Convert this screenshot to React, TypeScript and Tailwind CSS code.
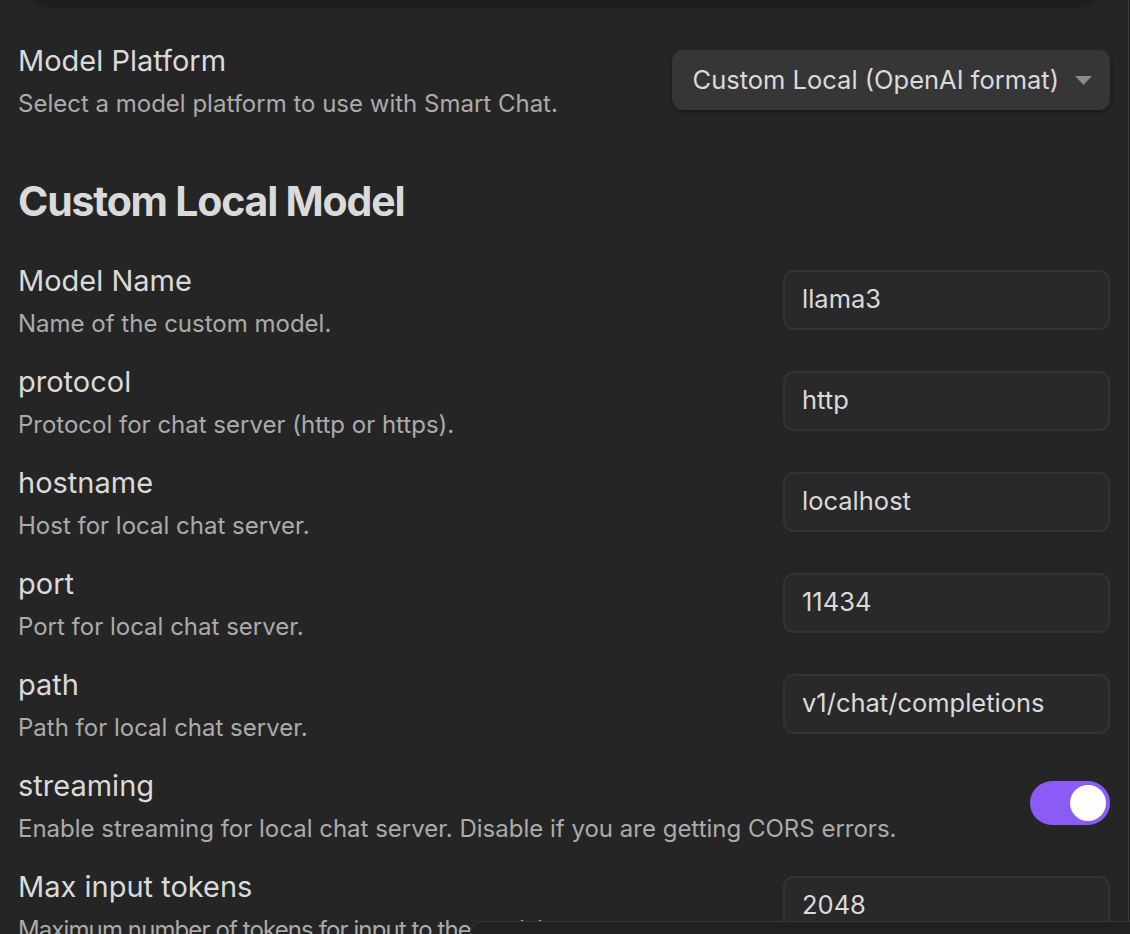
import React from "react"

type Row = {
  name: string
  desc: string
  value?: string
  toggle?: boolean
  tight?: boolean
}

const rows: Row[] = [
  { name: "Model Name", desc: "Name of the custom model.", value: "llama3" },
  { name: "protocol", desc: "Protocol for chat server (http or https).", value: "http" },
  { name: "hostname", desc: "Host for local chat server.", value: "localhost" },
  { name: "port", desc: "Port for local chat server.", value: "11434" },
  { name: "path", desc: "Path for local chat server.", value: "v1/chat/completions" },
  {
    name: "streaming",
    desc: "Enable streaming for local chat server. Disable if you are getting CORS errors.",
    toggle: true,
  },
  {
    name: "Max input tokens",
    desc: "Maximum number of tokens for input to the model.",
    value: "2048",
    tight: true,
  },
]

function Info({ name, desc, tight }: { name: string; desc: string; tight?: boolean }) {
  return (
    <div className="flex flex-col pt-[4px]">
      <div className="text-[29px] leading-[36px] text-[#dadada]">{name}</div>
      <div
        className={`mt-[9px] text-[24px] leading-[32px] text-[#ababab] whitespace-nowrap ${
          tight ? "tracking-[-0.9px]" : ""
        }`}
      >
        {desc}
      </div>
    </div>
  )
}

function Toggle() {
  return (
    <div className="w-[80px] h-[44px] mb-[4px] rounded-full bg-[#8a5cf5] flex items-center justify-end pr-[4px] shrink-0">
      <div className="w-[36px] h-[36px] rounded-full bg-white" />
    </div>
  )
}

function TextInput({ value }: { value: string }) {
  return (
    <div className="w-[327px] h-[60px] shrink-0 rounded-[11px] bg-[#292929] border-2 border-[#333333] flex items-center px-[17px] text-[25.5px] text-[#dadada]">
      {value}
    </div>
  )
}

export default function App() {
  return (
    <div
      className="relative w-[1130px] h-[934px] overflow-hidden bg-[#252525] flex"
      style={{ fontFamily: "Inter, 'Noto Sans', sans-serif" }}
    >
      <div className="flex-1 flex flex-col">
        {/* top bar edge */}
        <div className="h-[8px] shrink-0 overflow-hidden px-[26px]">
          <div className="-mt-[40px] h-[48px] rounded-[32px] bg-[#1e1e1e]" />
        </div>

        {/* Model Platform */}
        <div className="mt-[21px] h-[100px] shrink-0 px-[18px] flex items-center justify-between">
          <Info name="Model Platform" desc="Select a model platform to use with Smart Chat." />
          <div className="h-[60px] mt-[2px] rounded-[11px] bg-[#363636] shadow-[0_2px_4px_rgba(0,0,0,0.35)] flex items-center pl-[21px] pr-[18px] gap-[16px]">
            <span className="text-[25.5px] text-[#dadada]">Custom Local (OpenAI format)</span>
            <svg width="17" height="9" viewBox="0 0 17 9">
              <path d="M0 0 L17 0 L8.5 9 Z" fill="#8a8a8a" />
            </svg>
          </div>
        </div>

        {/* Heading */}
        <div className="pt-[47px] pb-[23px] px-[18px] shrink-0">
          <h2 className="text-[41px] leading-[50px] font-bold tracking-[-1.2px] text-[#dadada]">Custom Local Model</h2>
        </div>

        {rows.map((r) => (
          <div key={r.name} className="h-[101px] px-[18px] flex items-center justify-between shrink-0">
            <Info name={r.name} desc={r.desc} tight={r.tight} />
            {r.toggle ? <Toggle /> : <TextInput value={r.value ?? ""} />}
          </div>
        ))}
      </div>

      {/* scrollbar edge */}
      <div className="w-[1px] bg-[#3c3c3c]" />
      <div className="w-[1px] bg-[#1e1e1e]" />

      {/* status bar */}
      <div className="absolute left-[470px] top-[921px] right-0 h-[40px] rounded-tl-[12px] bg-[#212121] border-t border-l border-[#363636]" />
    </div>
  )
}
